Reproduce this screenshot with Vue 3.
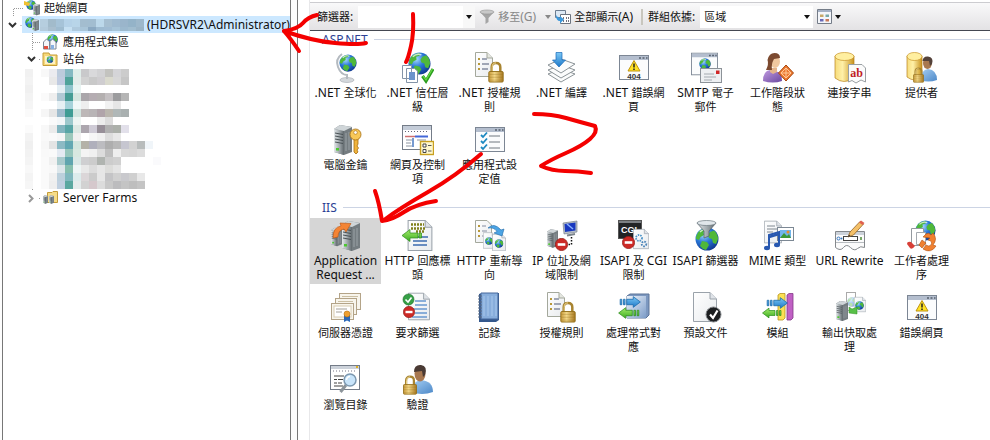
<script setup>
import { h } from 'vue'

// Latin runs are set one pixel larger than the Chinese text around them.
const Mixed = (props) =>
  h('span', { class: 'mixed' },
    props.text.split(/([\x20-\x7e]+)/).filter(Boolean).map((run) =>
      h('span', { class: /^[\x20-\x7e]/.test(run) ? 'latin' : 'han' }, run)))
Mixed.props = ['text']

const groups = [
  {
    name: 'ASP.NET',
    items: [
      ['globalization', '.NET 全球化'],
      ['trust', '.NET 信任層\n級'],
      ['rules', '.NET 授權規\n則'],
      ['compile', '.NET 編譯'],
      ['error404', '.NET 錯誤網\n頁'],
      ['smtp', 'SMTP 電子\n郵件'],
      ['session', '工作階段狀\n態'],
      ['connection', '連接字串'],
      ['providers', '提供者'],
      ['machinekey', '電腦金鑰'],
      ['controls', '網頁及控制\n項'],
      ['appsettings', '應用程式設\n定值'],
    ],
  },
  {
    name: 'IIS',
    items: [
      ['arr', 'Application\nRequest ...'],
      ['response', 'HTTP 回應標\n頭'],
      ['redirect', 'HTTP 重新導\n向'],
      ['iplimit', 'IP 位址及網\n域限制'],
      ['cgi', 'ISAPI 及 CGI\n限制'],
      ['isapi', 'ISAPI 篩選器'],
      ['mime', 'MIME 類型'],
      ['rewrite', 'URL Rewrite'],
      ['worker', '工作者處理\n序'],
      ['certs', '伺服器憑證'],
      ['reqfilter', '要求篩選'],
      ['log', '記錄'],
      ['rules', '授權規則'],
      ['handler', '處理常式對\n應'],
      ['defaultdoc', '預設文件'],
      ['modules', '模組'],
      ['cache', '輸出快取處\n理'],
      ['error404', '錯誤網頁'],
      ['browse', '瀏覽目錄'],
      ['auth', '驗證'],
    ],
  },
]

// Redacted areas: one hex colour per 8px block, "-" leaves a block empty.
const siteRows = [
  'f1f1f1 - f8f8f8 ebebef bccbdc 84b9c2 e0eeea c9c9cb d9d9db d2d2d4 c3c3bf d5d5d8 cccccc',
  'f3f3f3 - - e8e8e8 c0cbe0 4fa39a e4ecea d2d2d2 c9c9c9 cfcdd0 dadace d8d8d8 c6c6c6',
  'f0f0f0 - - - e4eef3 8fc4cc e8f4f2',
  'f3f3f3 - fafafa eeeeee b0c8d4 459c94 d6e6e0 aaa6aa b5adb2 b4b0b0 c4c0c2 9c9c9e b5b5b5',
  'f5f5f5 - - - e6f0f4 a5d2da f0f8f8 eeeeee - - f2f2f2 e6e6e6',
  'fafafa - f6f6f6 e6e6e6 a0bccd 3f9c94 d2e5e0 bdb8b8 b8b4b6 b0a4aa bab6ae b0b8b8 a9b0b0',
  '- - - fafafa f2f6f8 9cc8cc eef5f3 - - ececec dcdcdc',
  'fbfbfb - f8f8f8 ebebeb 83b5bf 58a6a6 dde8e4 aca6ae cfcbd6 978f98 b0b0b0 acb0aa e2e0ea',
  'f3f3f3 - f9f9f9 fafafa f6f6f6 9cc8bc f0f0f0 - f6f6f6 f0f0f0 dddddd e8e8e8',
  'f0f0f0 - f7f7f7 e4e4e4 8cbac4 62a8b2 d2e6de b4b2a8 b0b0bc bcbcc0 aeaeae b8b8b8 c6c6d0 d2d2d2 b8bcbc f0f5f9',
  'f2f2f2 - f9f9f9 fafafa e4eaf2 96c6bc d8e8e0 f4f4f4 f0f0f0 dcdcdc bfbfbf eeeeee d8d8d8 d6d6d6 dcdcdc',
  'f4f4f4 - fafafa f0f0f0 a8cacc 5fa5ae dae8e6 cfcfd1 cccccc b0b4b0 cccccc d0d0d0 - - - - fafafc',
  'f8f8f8 - fafafa f8f8f8 dce6ea 86bfae eef5f5 e8e8e8 dcdcdc e6e6e6 dcdcda e4e4e4',
  'f4f4f4 - fafafa f0f0f0 bcd0dc 80b8be dcecec dbd6d8 cbcbcb e6e6e6 c4c4c6 d0d0d0 c9c9cd d0d0d0 e8e8e8',
  'f6f6f6 - fafafa eeeeee c0d0e0 5aa8a0 e4ecec d2d2d2 d5c8cc dcdcdc c8c8c8 bcbcbe c4c4c4 bebebe c4c4c4',
]
const nameRows = [
  'b6cedf a2bbcb a6c3d8 b5d2e8 b8d5e9 a3bdcf a2bdd0 bcd8ea a6bfd1 9fbad0 9ab5cb 94b3c8 9db8cb',
  'b4cbdc a9bfcf 9fbcd0 c6e0f2 afcade a9c5d8 8ba9c2 9ebbd1 a0bcd3 a7c4d8 9cb9ce a1bdcf 9ab4c6',
]
const toBlocks = (rows) => rows.flatMap((row, y) =>
  row.split(' ').map((c, x) => ({ x: x * 8, y: y * 8, fill: '#' + c })).filter((b) => b.fill !== '#-'))
const siteBlocks = toBlocks(siteRows)
const nameBlocks = toBlocks(nameRows)
</script>

<template>
  <div class="manager">
    <svg class="sprite" aria-hidden="true">
      <defs>
        <radialGradient id="gSea" cx=".35" cy=".3" r=".8"><stop offset="0" stop-color="#a8dcff" /><stop offset=".45" stop-color="#2a78d8" /><stop offset="1" stop-color="#0c2f86" /></radialGradient>
        <linearGradient id="gGold" x1="0" x2="1"><stop offset="0" stop-color="#f7dc7a" /><stop offset=".4" stop-color="#fff0a8" /><stop offset="1" stop-color="#c8921c" /></linearGradient>
        <linearGradient id="gBrass" x1="0" x2="1"><stop offset="0" stop-color="#c89a3c" /><stop offset=".4" stop-color="#f4d888" /><stop offset="1" stop-color="#a87820" /></linearGradient>
        <linearGradient id="gSteel" x1="0" x2="1"><stop offset="0" stop-color="#e4e8ea" /><stop offset=".5" stop-color="#a4acb0" /><stop offset="1" stop-color="#60686c" /></linearGradient>
        <linearGradient id="gPaper" x1="0" y1="0" x2="1" y2="1"><stop offset="0" stop-color="#fff" /><stop offset="1" stop-color="#e8ebee" /></linearGradient>
        <linearGradient id="gBlue" x1="0" y1="0" x2="0" y2="1"><stop offset="0" stop-color="#7cc8f6" /><stop offset="1" stop-color="#1c78c8" /></linearGradient>
        <linearGradient id="gGreen" x1="0" y1="0" x2="0" y2="1"><stop offset="0" stop-color="#a4ec6c" /><stop offset="1" stop-color="#3cac20" /></linearGradient>
        <linearGradient id="gPurple" x1="0" y1="0" x2="1" y2="1"><stop offset="0" stop-color="#c09ae0" /><stop offset="1" stop-color="#6a48a0" /></linearGradient>
        <linearGradient id="gShirt" x1="0" y1="0" x2="1" y2="1"><stop offset="0" stop-color="#a8d0f4" /><stop offset="1" stop-color="#4c88c8" /></linearGradient>
        <linearGradient id="gCube" x1="0" y1="0" x2="1" y2="1"><stop offset="0" stop-color="#eef4fb" /><stop offset="1" stop-color="#7c9cc8" /></linearGradient>
      </defs>

      <symbol id="globe" viewBox="0 0 24 24">
        <circle cx="12" cy="12" r="11.5" fill="url(#gSea)" />
        <path d="M5 3.5Q9 .8 13 1.5L12 4 8.500 5 9 8 5.500 10 4 13 1 12Q1 7 5 3.500ZM15 5l4-1.500Q23 7 23 12l-2 5-3-1-1-4-3-1-1-3ZM7 14l5 1 2 3-3 5Q7 22 5 19Z" fill="#4fb83a" />
        <path d="M5 5Q9 1 14 3" stroke="#fff" stroke-opacity=".7" stroke-width="1.500" fill="none" />
      </symbol>
      <symbol id="doc" viewBox="0 0 24 30">
        <path d="M.5.5H17L23.500 7V29.500H.5Z" fill="url(#gPaper)" stroke="#9aa2aa" />
        <path d="M17 .5V7H23.500" fill="#dfe3e8" stroke="#9aa2aa" />
      </symbol>
      <symbol id="lock" viewBox="0 0 16 23">
        <path d="M3.500 12V6.500Q3.500 2 8 2T12.500 6.500V12" fill="none" stroke="#a88430" stroke-width="2.600" />
        <path d="M4 11V6.500Q4 2 8 2" fill="none" stroke="#f0dc98" />
        <rect x=".5" y="11" width="15" height="11" rx="1" fill="url(#gBrass)" stroke="#94701c" />
        <path d="M1 14h14M1 17h14M1 20h14" stroke="#94701c" stroke-opacity=".35" />
      </symbol>
      <symbol id="server" viewBox="0 0 18 30">
        <path d="M0 4 6 0 18 2V27L10 30 0 27Z" fill="#747c80" />
        <path d="M0 4 10 6V30L0 27Z" fill="url(#gSteel)" />
        <path d="M0 4 6 0 18 2 10 6Z" fill="#cfd5d8" />
        <path d="M1 8l8 1.500M1 11l8 1.500M1 14l8 1.500M1 17l8 1.500" stroke="#4a5256" />
        <path d="M12 8v18M15 7v18" stroke="#9aa2a6" />
        <rect x="2" y="23" width="3" height="2.500" fill="#4cc830" />
      </symbol>
      <symbol id="window" viewBox="0 0 30 25">
        <rect x=".5" y=".5" width="29" height="24" fill="#fbfcfd" stroke="#7c8694" />
        <rect x="1" y="1" width="28" height="4" fill="#b4bece" />
        <path d="M20 3h2M23.500 3h2M27 3h1.500" stroke="#56606e" stroke-width="1.500" />
      </symbol>
      <symbol id="stop" viewBox="0 0 12 12"><circle cx="6" cy="6" r="5.700" fill="#cc2a26" stroke="#8c1816" stroke-width=".6" /><rect x="2.500" y="4.800" width="7" height="2.400" fill="#fff" /></symbol>
      <symbol id="arrowR" viewBox="0 0 20 11"><path d="M1 3H2.500V8H1ZM4 3H5.500V8H4ZM7 3H13V.6L19.500 5.500 13 10.400V8H7Z" fill="url(#gBlue)" stroke="#1868a8" stroke-width=".7" /></symbol>
      <symbol id="arrowL" viewBox="0 0 20 11"><path d="M19 3H17.500V8H19ZM16 3H14.500V8H16ZM13 3H7V.6L.5 5.500 7 10.400V8H13Z" fill="url(#gGreen)" stroke="#2c8c1c" stroke-width=".7" /></symbol>

      <symbol id="i-globalization" viewBox="0 0 32 32">
        <ellipse cx="17" cy="28" rx="7" ry="2.500" fill="#d4d8dc" stroke="#a4aab0" stroke-width=".6" />
        <path d="M12 2Q5 7 8 15T17 23V27" fill="none" stroke="#b4bac0" stroke-width="2" />
        <use href="#globe" x="9" y="2" width="18" height="18" />
      </symbol>
      <symbol id="i-trust" viewBox="0 0 32 32">
        <use href="#globe" x="6" y="0" width="23" height="23" />
        <path d="M.5 13.500h9v13h-9ZM4.500 16.500H12.500L15.500 19V30.500H4.500Z" fill="#fff" stroke="#8494a8" />
        <path d="M7 20h6v8H7Z" fill="#6c94cc" />
        <path d="M20.500 24 24 29 31 17" fill="none" stroke="#2c9c20" stroke-width="3.200" /><path d="M21 24 24 28 30.500 17" fill="none" stroke="#68dc44" stroke-width="1.200" />
      </symbol>
      <symbol id="i-rules" viewBox="0 0 32 32">
        <path d="M1.500.5H13L18.500 6V24.500H1.500Z" fill="url(#gPaper)" stroke="#a4a89c" /><path d="M13 .5V6H18.500" fill="#e4e6e0" stroke="#a4a89c" />
        <path d="M4 7h2M4 12h2M4 17h2" stroke="#b89838" stroke-width="2" /><path d="M8 7h5M8 12h7M8 17h6" stroke="#848ca0" stroke-width="1.400" />
        <use href="#lock" x="14" y="9" width="16" height="22" />
      </symbol>
      <symbol id="i-compile" viewBox="0 0 32 32">
        <g fill="#fbfcfc" stroke="#8c9498"><path d="M2 22 15 17 29 22 15 30Z" /><path d="M2 18 15 13 29 18 15 26Z" /><path d="M2 13 15 7 29 12 15 21Z" /></g>
        <path d="M10 .5h6V8h3.500L13 15 6.500 8H10Z" fill="url(#gBlue)" stroke="#1868b8" stroke-width=".7" />
      </symbol>
      <symbol id="i-error404" viewBox="0 0 32 32">
        <use href="#window" x="1" y="3" width="30" height="25" />
        <path d="M16 8.500 22 19H10Z" fill="#ffe224" stroke="#c09410" stroke-linejoin="round" /><path d="M16 11.500v4M16 16.500v1.500" stroke="#222" stroke-width="1.500" />
        <text x="16" y="27" font-family="Liberation Sans, sans-serif" font-size="8" font-weight="bold" text-anchor="middle" fill="#333">404</text>
      </symbol>
      <symbol id="i-smtp" viewBox="0 0 32 32">
        <use href="#window" x="1" y="0" width="27" height="24" preserveAspectRatio="none" />
        <use href="#globe" x="9" y="6" width="12" height="12" />
        <rect x="10.500" y="16.500" width="21" height="14" fill="#eef0f2" stroke="#8c9298" /><path d="M14 22h10M14 25h12M14 28h8" stroke="#a4aab0" /><rect x="26" y="18.500" width="3.500" height="3.500" fill="#d02828" />
      </symbol>
      <symbol id="i-session" viewBox="0 0 32 32">
        <path d="M1 29Q1 19 8 18L13 20Q20 18 20 29Q11 32 1 29Z" fill="url(#gPurple)" />
        <path d="M8 16h7v4l-4 2-3-2Z" fill="#e4b48c" /><ellipse cx="13" cy="9.500" rx="5" ry="6.500" fill="#f0c8a0" />
        <path d="M4 18Q7 12 5.500 8Q7 1 12.500 1Q18 1 18 6L12 7Q9 12 10 18Z" fill="#7c4a30" />
        <path d="M24 13 31.500 21 24 29 16.500 21Z" fill="#ec7830" stroke="#a84810" /><path d="M24 16 24 26M19 21H29M24 16 19 21 24 26 29 21Z" stroke="#ffc898" fill="none" />
      </symbol>
      <symbol id="i-connection" viewBox="0 0 32 32">
        <path d="M1 4V26Q10 33 20 26V4Z" fill="url(#gGold)" stroke="#b8821c" stroke-width=".7" /><ellipse cx="10.500" cy="4.500" rx="9.500" ry="4" fill="#ffefa0" stroke="#c89428" stroke-width=".7" />
        <path d="M14.500 12.500H28L31.500 16V30L27 28 22 31 18 28.500 14.500 30Z" fill="#fbfbfb" stroke="#9aa0a4" />
        <text x="22.500" y="25" font-family="Liberation Serif, serif" font-size="12" font-weight="bold" text-anchor="middle" fill="#c02024">ab</text>
      </symbol>
      <symbol id="i-providers" viewBox="0 0 32 32">
        <path d="M1 4V25Q9 31 16 25V4Z" fill="url(#gGold)" stroke="#b8821c" stroke-width=".7" /><ellipse cx="8.500" cy="4.500" rx="7.500" ry="4" fill="#ffefa0" stroke="#c89428" stroke-width=".7" />
        <path d="M14 28Q15 18 22 17Q31 18 31 28Q22 31 14 28Z" fill="url(#gShirt)" /><ellipse cx="21.500" cy="11" rx="4.500" ry="6" fill="#a87850" /><path d="M16.500 9Q17 4 22 4.500Q28 5 26 12L24 14 23 9Z" fill="#54423a" />
        <use href="#lock" x="7" y="15" width="11" height="16" />
      </symbol>
      <symbol id="i-machinekey" viewBox="0 0 32 32">
        <use href="#server" x="3" y="1" width="20" height="30" preserveAspectRatio="none" />
        <path d="M24 14V28l2 2 2-2-1-2 1.500-2-1.500-2 1-2V14" fill="#f0b43c" stroke="#a46c10" stroke-width=".8" /><circle cx="25.500" cy="10.500" r="5.500" fill="#f8c858" stroke="#a46c10" stroke-width=".8" /><circle cx="25.500" cy="8.500" r="1.800" fill="#fff" stroke="#a46c10" stroke-width=".6" />
      </symbol>
      <symbol id="i-controls" viewBox="0 0 32 32">
        <rect x=".5" y="1.500" width="29" height="24" fill="#fff" stroke="#747c88" /><path d="M1 4h28" stroke="#c4ccd8" stroke-width="4" /><path d="M3 7.500h24" stroke="#667" stroke-dasharray="1 2" />
        <path d="M3 12.500h10" stroke="#d07070" stroke-width="1.500" /><path d="M13 12.500h13" stroke="#4468d8" stroke-width="2" /><path d="M4 16h6M4 19h5M4 22h6M15 16h9" stroke="#8c94a0" /><path d="M11 14v9" stroke="#4878c0" stroke-width="1.500" />
        <rect x="18.500" y="17.500" width="13" height="13" fill="#fff8cc" stroke="#c8a020" stroke-width="1.400" /><path d="M21 20h3v3h-3ZM21 25.500h3v3h-3Z" fill="#fff" stroke="#444" /><path d="M26 21.500h3.500M26 27h3.500" stroke="#555" />
      </symbol>
      <symbol id="i-appsettings" viewBox="0 0 32 32">
        <use href="#window" x="1" y="3" width="30" height="25" />
        <path d="M7 11l2 2 4-4.500M7 17l2 2 4-4.500M7 23l2 2 4-4.500" stroke="#1c88c0" stroke-width="1.800" fill="none" /><path d="M15 12h11M15 18h11M15 24h11" stroke="#707880" />
      </symbol>
      <symbol id="i-arr" viewBox="0 0 32 32">
        <use href="#server" x="1" y="6" width="11" height="22" preserveAspectRatio="none" /><use href="#server" x="11" y="1" width="20" height="30" preserveAspectRatio="none" />
        <path d="M3 18Q3 7 11 6L10 3 21 3.500 16 12 14 9Q8 10 8 17Z" fill="#f48434" stroke="#b85410" stroke-width=".6" />
      </symbol>
      <symbol id="i-response" viewBox="0 0 32 32">
        <use href="#doc" x="5" y="0" width="26" height="31" preserveAspectRatio="none" />
        <path d="M9 4.500h13M9 8.500h15M14 11.500h9" stroke="#80801c" stroke-width="2.500" stroke-dasharray="2 1" /><path d="M11 21h14M11 25h14M15 17h11" stroke="#3c6cb0" stroke-width="1.300" />
        <path d="M19.500 13V18H17V13ZM16 13V18H8V21.500L0 15.500 8 9.500V13Z" fill="url(#gGreen)" stroke="#2c8c1c" stroke-width=".7" />
      </symbol>
      <symbol id="i-redirect" viewBox="0 0 32 32">
        <path d="M1.500.5H13L17.500 5V22.500H1.500Z" fill="url(#gPaper)" stroke="#a4a89c" /><path d="M4 6h2M4 11h2M4 16h2" stroke="#b89838" stroke-width="2" /><path d="M8 6h4M8 11h5M8 16h3" stroke="#848ca0" />
        <use href="#doc" x="9" y="10" width="13" height="21" preserveAspectRatio="none" /><use href="#globe" x="11" y="17" width="8" height="8" />
        <use href="#doc" x="18" y="14" width="14" height="17" preserveAspectRatio="none" /><use href="#globe" x="20.500" y="19" width="9" height="9" />
        <path d="M14 8Q20 2 27 10L30 9 28 16 20 13 23 11.500Q20 7 14 8Z" fill="#4ca4e4" stroke="#1c68a8" stroke-width=".6" />
      </symbol>
      <symbol id="i-iplimit" viewBox="0 0 32 32">
        <use href="#server" x="1" y="8" width="11" height="21" preserveAspectRatio="none" />
        <path d="M17 3 31 1V12L18 14Z" fill="#b8c0c8" stroke="#6c7480" stroke-width=".6" /><path d="M18.500 4 29.500 2.500V10.500L19 12Z" fill="#1838c0" /><path d="M21 4l6 5" stroke="#88b0ff" stroke-width="1.500" /><path d="M21 15.500 29 14" stroke="#7c848c" stroke-width="2" />
        <path d="M25.500 17V24.500H20" fill="none" stroke="#111" stroke-width="1.500" stroke-dasharray="1.500 1.500" /><use href="#stop" x="9" y="18" width="13" height="13" />
      </symbol>
      <symbol id="i-cgi" viewBox="0 0 32 32">
        <rect x=".5" y=".5" width="23" height="18" fill="#222426" stroke="#555" /><path d="M1 2h22" stroke="#7c8084" stroke-width="2" />
        <text x="3" y="13" font-family="Liberation Sans, sans-serif" font-size="9" font-weight="bold" fill="#fff">CGI</text>
        <use href="#doc" x="15" y="8" width="16" height="22" preserveAspectRatio="none" /><circle cx="21" cy="18" r="3" fill="none" stroke="#4c94c8" stroke-width="1.800" stroke-dasharray="1.500 1" /><circle cx="26" cy="24" r="2.300" fill="none" stroke="#4c84b8" stroke-width="1.800" stroke-dasharray="1.500 1" />
        <use href="#stop" x="4" y="16" width="13" height="13" />
      </symbol>
      <symbol id="i-isapi" viewBox="0 0 32 32">
        <use href="#globe" x="5" y="7" width="24" height="24" /><path d="M7 3 14 11V18L19 16V11L26 3Z" fill="url(#gSteel)" stroke="#505c64" stroke-width=".7" /><ellipse cx="16.500" cy="3" rx="9.500" ry="2.500" fill="#e0e6ea" stroke="#6c787f" stroke-width=".7" />
      </symbol>
      <symbol id="i-mime" viewBox="0 0 32 32">
        <use href="#doc" x="2" y="0" width="18" height="24" preserveAspectRatio="none" /><path d="M5 6h8M5 9h10M5 12h6" stroke="#808890" />
        <rect x="15.500" y="7.500" width="16" height="13" fill="#fff" stroke="#7c8894" /><rect x="18" y="10" width="11" height="8" fill="#70b4ec" /><path d="M18 18l4-5 3 3 2-2 2 4Z" fill="#3c9838" /><circle cx="26" cy="12" r="1.500" fill="#e88c28" />
        <path d="M7 28V15L17 12V25" fill="none" stroke="#2858b0" stroke-width="2" /><path d="M7 17 17 14" stroke="#2858b0" stroke-width="2.500" /><ellipse cx="5" cy="28" rx="3" ry="2.200" fill="#2858b0" /><ellipse cx="15" cy="25" rx="3" ry="2.200" fill="#2858b0" />
      </symbol>
      <symbol id="i-rewrite" viewBox="0 0 32 32">
        <path d="M1.500 11.500h29v16q-4-2-7 1t-7-1-7 0-8 0Z" fill="#fbfbfb" stroke="#84888c" /><path d="M2 12h28v3H2Z" fill="#ccd2da" /><rect x="9.500" y="16.500" width="14" height="4" fill="#fff" stroke="#444" /><path d="M2 22.500h28" stroke="#b8bcc0" /><circle cx="4.500" cy="18.500" r="1.500" fill="none" stroke="#3878c0" /><circle cx="7.500" cy="18.500" r="1" fill="#3878c0" /><path d="M26 17h2v3h-2Z" fill="#78a868" />
        <path d="M14 17 16 12 26 1.500 29.500 4 19.500 15Z" fill="#f4c068" stroke="#946428" stroke-width=".8" /><path d="M25 2.500 27 .5 30.500 3 28.500 5Z" fill="#e06050" /><path d="M14 17l1-2.500 1.500 1.500Z" fill="#333" />
      </symbol>
      <symbol id="i-worker" viewBox="0 0 32 32">
        <use href="#globe" x="9" y="0" width="21" height="21" /><path d="M5.500 8.500h12v17h-12Z" fill="#fff" stroke="#949aa0" /><path d="M1 24q0-3 4-2l4 4q-3 4-5 2Z" fill="#d84038" /><path d="M10.500 12.500h9v12h-9Z" fill="#fff" stroke="#a4aab0" />
        <path d="M17 17 24 18 22 20Q27 21 25 25Q23 27 20 25L17 29Q25 34 30 26L27 25Q32 19 27 13L25 15Q23 12 20 14Z" fill="#f08030" stroke="#b05010" stroke-width=".6" /><path d="M16 20 20 23 16 28 13 25Z" fill="#f08030" stroke="#b05010" stroke-width=".6" />
      </symbol>
      <symbol id="i-certs" viewBox="0 0 32 32">
        <g fill="#f8f5ec" stroke="#b4a488"><rect x="9.500" y="1.500" width="21" height="16" /><rect x="5.500" y="6.500" width="21" height="16" /><rect x="1.500" y="11.500" width="22" height="16" /></g>
        <path d="M12 4.500h16M8 9.500h15" stroke="#ccc0a4" /><rect x="4" y="14" width="17" height="11" fill="#fff" stroke="#d8ccb0" /><path d="M6 17h11M6 20h6" stroke="#a4a098" /><path d="M14 23v7l3-1.500 3 1.500V23Z" fill="#2c68b8" /><circle cx="17" cy="22" r="3" fill="#f0a030" stroke="#b87010" stroke-width=".6" />
      </symbol>
      <symbol id="i-reqfilter" viewBox="0 0 32 32">
        <use href="#doc" x="6" y="0" width="22" height="29" preserveAspectRatio="none" /><path d="M13 9h11M13 13h12M10 17h15M13 21h12M10 25h15" stroke="#6898d0" stroke-width="1.400" />
        <circle cx="6.500" cy="7.500" r="5.500" fill="#36a046" stroke="#1c6c28" stroke-width=".6" /><path d="M3.500 7.500 6 10 9.500 5.500" stroke="#fff" stroke-width="1.600" fill="none" /><use href="#stop" x="1" y="14" width="12" height="12" />
      </symbol>
      <symbol id="i-log" viewBox="0 0 32 32">
        <path d="M5 2 8 1H25V28L22 30H5Z" fill="#34588c" /><path d="M7 1H24V27H7Z" fill="#88aedc" stroke="#46699c" /><path d="M10 4v20M14 4v20M18 4v20M22 4v20" stroke="#a8c8ec" /><path d="M4 4h4M4 7h4M4 10h4M4 13h4M4 16h4M4 19h4M4 22h4M4 25h4" stroke="#5c6c84" />
      </symbol>
      <symbol id="i-handler" viewBox="0 0 32 32">
        <path d="M9 4 12 2H31V23L28 26H9Z" fill="#7c98c0" stroke="#5c7498" /><path d="M9 4H28V26H9Z" fill="url(#gCube)" /><use href="#arrowR" x="1" y="4" width="22" height="12" /><use href="#arrowL" x="0" y="15" width="22" height="12" />
      </symbol>
      <symbol id="i-defaultdoc" viewBox="0 0 32 32">
        <use href="#doc" x="3" y="0" width="24" height="30" /><circle cx="23.500" cy="22.500" r="7.500" fill="#1c1e20" stroke="#84888c" /><path d="M20 22.500 23 26 27.500 18.500" stroke="#fff" stroke-width="2.200" fill="none" />
      </symbol>
      <symbol id="i-modules" viewBox="0 0 32 32">
        <path d="M16 3 18 1.500H23V26L21 28H16Z" fill="#fce054" stroke="#b89420" stroke-width=".8" /><path d="M25 3 27 1.500H31V26L29 28H25Z" fill="#c060c4" stroke="#843888" stroke-width=".8" /><use href="#arrowR" x="4" y="5" width="22" height="12" /><use href="#arrowL" x="0" y="15" width="20" height="12" />
      </symbol>
      <symbol id="i-cache" viewBox="0 0 32 32">
        <path d="M12.500.5H21.500V18.500H12.500Z" fill="#fff" stroke="#555" stroke-dasharray="1 1" /><use href="#globe" x="13" y="5" width="10" height="10" opacity=".4" /><use href="#server" x="2" y="7" width="12" height="24" preserveAspectRatio="none" />
        <use href="#doc" x="20" y="4" width="12" height="17" preserveAspectRatio="none" /><use href="#globe" x="21" y="9" width="9" height="9" /><path d="M15 15l3 2 5-2v7l-8-1Z" fill="#58c048" stroke="#2c8c1c" stroke-width=".5" />
      </symbol>
      <symbol id="i-browse" viewBox="0 0 32 32">
        <rect x=".5" y="1.500" width="29" height="24" fill="#fff" stroke="#747c88" /><path d="M1 3.500h28" stroke="#ccd2da" stroke-width="3" /><path d="M3 7h24" stroke="#778" stroke-dasharray="1 2" /><path d="M26 3h2" stroke="#e0b020" stroke-width="2" />
        <path d="M4 12h10M4 15.500h3M8 15.500h5M4 19h3M8 19h4M4 22h9" stroke="#444" stroke-width="1.200" /><path d="M16 21 10.500 28" stroke="#8c949a" stroke-width="3" /><circle cx="20" cy="16" r="6" fill="#c8e4fa" stroke="#7c98b0" stroke-width="1.500" /><path d="M16.500 16Q17 12.500 20 12.500" fill="none" stroke="#fff" stroke-width="1.500" />
      </symbol>
      <symbol id="i-auth" viewBox="0 0 32 32">
        <path d="M9 28Q10 17 19 16Q31 17 31 28Q20 32 9 28Z" fill="url(#gShirt)" /><ellipse cx="18" cy="9.500" rx="5.500" ry="8" fill="#a87850" /><path d="M12 8Q12 .5 19 1Q26 2 23 11L21 13 20 7Z" fill="#4a3a34" /><use href="#lock" x="1" y="11" width="14" height="20" />
      </symbol>

      <symbol id="t-start" viewBox="0 0 16 16"><use href="#globe" x="2" y="0" width="10" height="10" /><path d="M0 1 6 3 5 6 0 5Z" fill="#f0c030" /><use href="#server" x="9" y="3" width="7" height="13" preserveAspectRatio="none" /></symbol>
      <symbol id="t-server" viewBox="0 0 16 16"><use href="#globe" x="1" y="0" width="11" height="11" /><use href="#server" x="8" y="1" width="7" height="14" preserveAspectRatio="none" /></symbol>
      <symbol id="t-pool" viewBox="0 0 16 16"><use href="#globe" x="5" y="0" width="11" height="11" /><path d="M1.500 8 4.500 5 8 8V15H1.500ZM7.500 8l3-3 3.500 3v7H7.500Z" fill="#f4f6fa" stroke="#7c8694" /><path d="M2 12h4v3H2Z" fill="#e05040" /><path d="M9 11h3v4H9Z" fill="#88b0e0" /></symbol>
      <symbol id="t-sites" viewBox="0 0 16 16"><path d="M1 2H7L8 4H15V14.500H1Z" fill="#f6d878" stroke="#c49c38" /><rect x="3" y="5" width="10" height="8" fill="#fdf2c4" /><use href="#globe" x="4.500" y="5" width="7" height="7" /></symbol>
      <symbol id="t-farms" viewBox="0 0 16 16"><path d="M5.500 2.500H10L11 1.500H15.500V12.500H5.500Z" fill="#f6dc88" stroke="#c49c38" /><use href="#server" x="1" y="4" width="5" height="11" preserveAspectRatio="none" /><use href="#server" x="7" y="4" width="5" height="11" preserveAspectRatio="none" /></symbol>
    </svg>

    <nav class="tree" aria-label="連線">
      <div class="row root">
        <svg class="gutter" width="21" height="17"><path d="M10.500 17V9.500H21" /></svg>
        <svg class="mini" width="16" height="16"><use href="#t-start" /></svg>
        <Mixed text="起始網頁" />
      </div>
      <div class="row root">
        <svg class="gutter" width="19" height="17"><path d="M17.500 9.500H19" /><path class="chev" d="M6 7l3.500 3.500L13 7" /></svg>
        <div class="picked">
          <svg class="mini" width="16" height="16"><use href="#t-server" /></svg>
          <svg class="name" width="104" height="12"><rect v-for="(b, i) in nameBlocks" :key="i" :x="b.x" :y="b.y" width="8" height="8" :fill="b.fill" /></svg>
          <Mixed text="(HDRSVR2\Administrator)" />
        </div>
      </div>
      <div class="row">
        <svg class="gutter" width="38" height="17"><path d="M29.500 0V17M30 9.500H38" /></svg>
        <svg class="mini" width="16" height="16"><use href="#t-pool" /></svg>
        <Mixed text="應用程式集區" />
      </div>
      <div class="row">
        <svg class="gutter" width="38" height="17"><path d="M36 9.500H38" /><path class="chev" d="M25 7l3.500 3.500L32 7" /></svg>
        <svg class="mini" width="16" height="16"><use href="#t-sites" /></svg>
        <Mixed text="站台" />
      </div>
      <svg class="sites" width="136" height="120" shape-rendering="crispEdges"><rect v-for="(b, i) in siteBlocks" :key="i" :x="b.x" :y="b.y" width="8" height="8" :fill="b.fill" /></svg>
      <div class="row">
        <svg class="gutter" width="38" height="17"><path d="M29.500 0V2M36 9.500H38" /><path class="chev closed" d="M26 6l3.500 3.500L26 13" /></svg>
        <svg class="mini" width="16" height="16"><use href="#t-farms" /></svg>
        <Mixed text="Server Farms" />
      </div>
    </nav>

    <main class="pane">
      <div class="toolbar">
        <label for="filter"><Mixed text="篩選器:" /></label>
        <div class="combo">
          <input id="filter" type="text" />
          <button type="button" aria-label="篩選器清單"><i class="caret"></i></button>
        </div>
        <button type="button" class="tool dim" disabled>
          <svg width="16" height="16"><path d="M1 3 6.500 9V15L9.500 13V9L15 3Z" fill="#a4a4a4" /><ellipse cx="8" cy="3" rx="7" ry="2" fill="#c8c8c8" stroke="#949494" stroke-width=".6" /></svg>
          <Mixed text="移至(G)" /><i class="caret"></i>
        </button>
        <button type="button" class="tool">
          <svg width="16" height="16"><path d="M.5 1.500h10v7H.5Z" fill="#dce8f4" stroke="#6c7c90" /><path d="M5.500 5.500h10v9h-10Z" fill="#fff" stroke="#6c7480" /><path d="M8 9h1M11 9h1M13 9h1M8 12h1M11 12h1M13 12h1" stroke="#445" stroke-width="1.500" /><path d="M1 6q0 6 4 6v2.500l4-4-4-3.500v2q-2 0-4-3Z" fill="#3c98dc" /></svg>
          <Mixed text="全部顯示(A)" />
        </button>
        <span class="sep"></span>
        <label for="grouping"><Mixed text="群組依據:" /></label>
        <div class="picker">
          <select id="grouping"><option>區域</option></select>
          <i class="caret"></i>
        </div>
        <button type="button" class="tool view" aria-label="檢視">
          <svg width="15" height="15"><path d="M.5.5h14v14H.5Z" fill="#f4f6fa" stroke="#747c88" /><path d="M1 2h13" stroke="#a4b0c4" stroke-width="2" /><path d="M3 5.500h3.500v2.500H3Z" fill="#c8a868" /><path d="M8.500 5.500H12v2.500H8.500Z" fill="#78a8a8" /><path d="M3 10h3.500v2.500H3Z" fill="#6868b8" /><path d="M8.500 10H12v2.500H8.500Z" fill="#c87858" /></svg>
          <i class="caret"></i>
        </button>
      </div>

      <section v-for="group in groups" :key="group.name" class="group">
        <h2><Mixed :text="group.name" /></h2>
        <div class="features">
          <button v-for="([icon, label], i) in group.items" :key="i" type="button" class="feature" :class="{ selected: icon === 'arr' }">
            <svg width="32" height="32"><use :href="'#i-' + icon" /></svg>
            <Mixed :text="label" />
          </button>
        </div>
      </section>
    </main>

    <svg class="marks" width="640" height="240" aria-hidden="true">
      <path d="M317 15Q308 17 303 23T284 31Q312 41 335 43T366 43" />
      <path d="M284 31Q291 39 299 51" />
      <path d="M413 14Q414 33 411 46T406 62" />
      <path d="M534 114Q552 114 566 118T595 126Q598 132 590 139T566 153T541 166Q552 171 565 171T591 173" />
      <path d="M481 154Q456 176 428 192T384 220" />
      <path d="M375 191Q379 202 382 221Q392 220 404 212T436 201" />
    </svg>
  </div>
</template>

<style>
body {
  background: #fdfdfd;
}
.mixed {
  white-space: pre-line;
  font-family: "Noto Sans", "Noto Sans CJK TC", sans-serif;
  font-size: 11px;
  line-height: 14px;
}
.mixed .latin {
  font-size: 12px;
  white-space: pre-wrap;
}
</style>

<style scoped>
.manager {
  position: relative;
  display: flex;
  min-height: 100vh;
  overflow: hidden;
  color: #111;
  font-family: "Noto Sans", "Noto Sans CJK TC", sans-serif;
  font-size: 11px;
}
.sprite {
  position: absolute;
  width: 0;
  height: 0;
}
button,
input,
select {
  margin: 0;
  padding: 0;
  border: 0;
  background: none;
  color: inherit;
  font: inherit;
}
.tree {
  flex: 0 0 287px;
  margin-left: 2px;
  border-left: 1px solid #777;
  border-right: 1px solid #777;
  background: #fff;
}
.row {
  display: flex;
  align-items: center;
  height: 17px;
  gap: 5px;
  white-space: nowrap;
}
.row:first-child {
  margin-top: -1px;
}
.row.root {
  gap: 4px;
}
.row.root .gutter {
  margin-right: -4px;
}
.gutter {
  flex: none;
  margin-right: -4px;
  fill: none;
  stroke: #999;
  stroke-dasharray: 1 1;
}
.chev {
  stroke: #333;
  stroke-width: 2;
  stroke-dasharray: none;
}
.chev.closed {
  stroke: #999;
}
.picked {
  display: flex;
  flex: 1;
  align-items: center;
  height: 17px;
  padding-left: 2px;
  background: #cce8ff;
}
.name {
  margin-right: 3px;
}
.mini,
.name {
  flex: none;
}
.sites {
  display: block;
  margin: 2px 0 0 22px;
}
.pane {
  flex: 1;
  min-width: 0;
  margin-left: 6px;
  padding: 2px 0 0 12px;
  border-left: 1px solid #777;
  background: linear-gradient(90deg, #fff 11px, #e8e8ea 11px, #e8e8ea 12px, #fff 12px);
}
.toolbar {
  display: flex;
  align-items: center;
  height: 27px;
  padding-left: 7px;
  border-top: 1px solid #ccccd0;
  border-bottom: 1px solid #444852;
  background: linear-gradient(#f9f9fa, #e3e2e4);
  white-space: nowrap;
}
.combo {
  display: flex;
  width: 117px;
  height: 22px;
  margin: 0 4px 0 5px;
  background: #fff;
}
.combo input {
  flex: 1;
  min-width: 0;
}
.combo button {
  display: flex;
  align-items: center;
  justify-content: center;
  width: 12px;
  background: #f8f8f8;
}
.caret {
  width: 0;
  border: 3px solid transparent;
  border-top: 4px solid #111;
  border-bottom: 0;
}
.tool {
  display: flex;
  align-items: center;
  gap: 3px;
}
.dim {
  margin-right: 4px;
  color: #888;
}
.dim .caret {
  margin-left: 6px;
  border-top-color: #888;
}
.sep {
  width: 2px;
  height: 16px;
  margin: 0 5px 0 8px;
  background: #c8c6be;
}
.picker {
  display: flex;
  align-items: center;
  width: 110px;
  height: 22px;
  margin: 0 4px 0 5px;
  padding-right: 3px;
  background: #fff;
}
.picker select {
  flex: 1;
  height: 22px;
  padding-left: 4px;
  appearance: none;
}
.group + .group {
  margin-top: 5px;
}
.group h2 {
  display: flex;
  align-items: center;
  gap: 6px;
  height: 17px;
  margin: 0;
  padding: 0 0 2px 12px;
  color: #2c3f94;
  font-weight: normal;
}
.group h2::after {
  content: "";
  flex: 1;
  height: 1px;
  background: #ccd4e4;
}
.features {
  display: grid;
  grid-template-columns: repeat(auto-fill, 72px);
  grid-auto-rows: 72px;
  align-items: start;
}
.feature {
  display: flex;
  flex-direction: column;
  align-items: center;
  gap: 2px;
  width: 71px;
  padding: 2px 0;
  text-align: center;
  white-space: nowrap;
}
.feature.selected {
  background: #d6d6d6;
}
.marks {
  position: absolute;
  top: 0;
  left: 0;
  fill: none;
  stroke: #f40000;
  stroke-width: 4;
  stroke-linecap: round;
  stroke-linejoin: round;
  pointer-events: none;
}
</style>
